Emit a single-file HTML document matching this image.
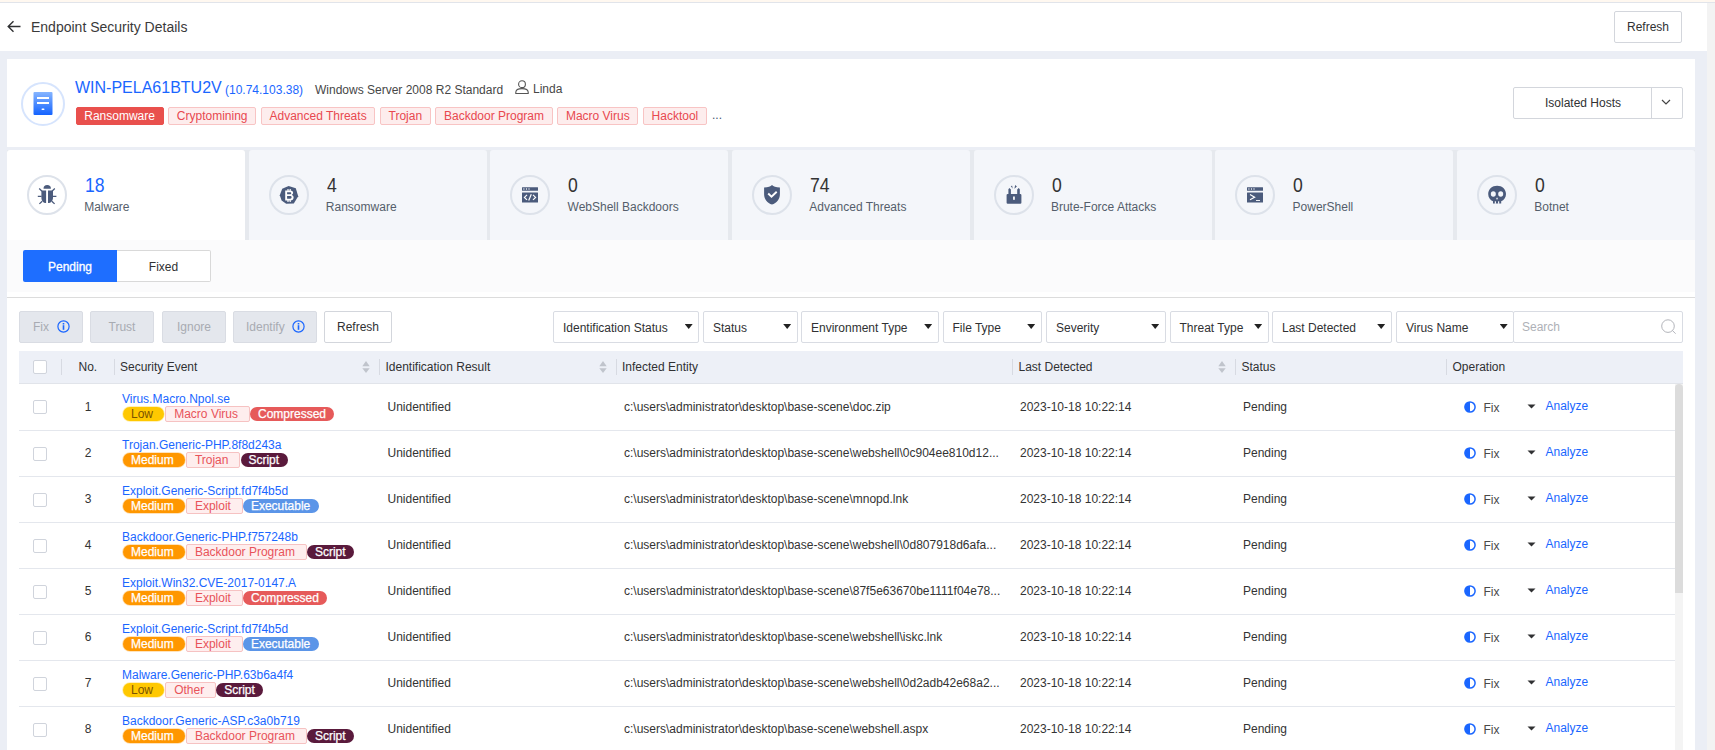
<!DOCTYPE html>
<html><head><meta charset="utf-8">
<style>
*{box-sizing:border-box;margin:0;padding:0}
html,body{width:1715px;height:750px;overflow:hidden}
body{position:relative;background:#ebeef5;font-family:"Liberation Sans",sans-serif;font-size:12px;color:#333;line-height:14px}
.a{position:absolute;white-space:nowrap}
.t{position:absolute;white-space:nowrap;line-height:14px;height:14px}
.btn{position:absolute;background:#fff;border:1px solid #d3d6dc;border-radius:2px;text-align:center;color:#303133}
.htag{position:absolute;top:107px;height:18px;line-height:16px;border:1px solid #f8c4c4;background:#fdeded;color:#e8484f;border-radius:2px;padding:0 7.75px;white-space:nowrap}
.card{position:absolute;top:150px;width:238px;height:90px;background:#f4f6fa}
.circ{position:absolute;left:20px;top:25px;width:40px;height:40px;border:2px solid #dde2ea;border-radius:50%}
.num{position:absolute;left:78px;top:174px;font-size:20px;line-height:22px;color:#3a3a3a;transform:scaleX(0.88);transform-origin:0 0}
.lbl{position:absolute;left:78px;top:200px;color:#555e6b}
.tb{position:absolute;top:311px;height:32px;line-height:30px;border:1px solid #d9dce3;background:#e4e7ed;color:#a8abb2;border-radius:2px;text-align:center}
.dd{position:absolute;top:311px;height:32px;line-height:32px;border:1px solid #d9dce3;background:#fff;color:#303133;border-radius:2px;padding-left:9px}
.dd i{position:absolute;right:5.3px;top:11.9px;width:8px;height:5px;background:#222;clip-path:polygon(0 0,100% 0,50% 100%)}
.hsep{position:absolute;top:359px;width:1px;height:16px;background:#d7dae2}
.srt{position:absolute;top:361px;width:8px;height:12px}
.row{position:absolute;left:19px;width:1656px;height:46px;border-bottom:1px solid #e4e7ed;background:#fff}
.cb{position:absolute;width:14px;height:14px;border:1px solid #d0d4dc;border-radius:2px;background:#fff}
.ev{position:absolute;color:#1a66ff}
.pill{position:absolute;height:14px;line-height:15px;border-radius:7px;white-space:nowrap;padding-left:8.2px}
.rtag{position:absolute;height:16px;line-height:15px;border:1px solid #f6c2c2;background:#feeeee;color:#e8535a;border-radius:2px;padding-left:7.9px;white-space:nowrap}
.op{position:absolute;color:#1a66ff}
</style></head><body>
<!-- top strip -->
<div class="a" style="left:0;top:0;width:1715px;height:2px;background:#fff8f0"></div>
<div class="a" style="left:0;top:2px;width:1715px;height:1px;background:#e1e4ea"></div>
<!-- page scrollbar track -->
<div class="a" style="left:1707px;top:3px;width:8px;height:747px;background:#f3f3f3"></div>
<!-- header -->
<div class="a" style="left:0;top:3px;width:1707px;height:48px;background:#fff"></div>
<svg class="a" style="left:7px;top:20px" width="14" height="13" viewBox="0 0 14 13"><path d="M13.5 6.5H1.2M6.5 1.2L1.2 6.5L6.5 11.8" fill="none" stroke="#303133" stroke-width="1.4"/></svg>
<div class="a" style="left:31px;top:19px;font-size:14px;line-height:16px;color:#3a3a3a">Endpoint Security Details</div>
<div class="btn" style="left:1614px;top:11px;width:68px;height:32px;line-height:30px">Refresh</div>

<!-- host card -->
<div class="a" style="left:7px;top:59px;width:1688px;height:88px;background:#fff"></div>
<div class="a" style="left:21px;top:81.6px;width:44px;height:44px;border:2px solid #d6e4fd;border-radius:50%"></div>
<svg class="a" style="left:33px;top:92px" width="20" height="23" viewBox="0 0 20 23"><defs><linearGradient id="sg" x1="0" y1="0" x2="0" y2="1"><stop offset="0" stop-color="#86b5ff"/><stop offset="1" stop-color="#1463ff"/></linearGradient></defs><rect x="0.5" y="0" width="19" height="23" rx="1" fill="url(#sg)"/><rect x="4" y="5" width="12" height="2" fill="#fff"/><rect x="4" y="10" width="12" height="2" fill="#fff"/><rect x="8.5" y="16.5" width="3" height="1.5" rx="0.7" fill="#fff"/></svg>
<div class="a" style="left:75px;top:79px;font-size:16px;line-height:18px;color:#1a66ff">WIN-PELA61BTU2V</div>
<div class="t" style="left:225px;top:83px;color:#1a66ff">(10.74.103.38)</div>
<div class="t" style="left:315px;top:83px;color:#474747">Windows Server 2008 R2 Standard</div>
<svg class="a" style="left:515px;top:80px" width="14" height="14" viewBox="0 0 14 14"><circle cx="7" cy="4.2" r="3.4" fill="none" stroke="#555" stroke-width="1.1"/><path d="M0.8 13.5V12.3C0.8 9.8 3.2 8.6 7 8.6S13.2 9.8 13.2 12.3V13.5Z" fill="none" stroke="#555" stroke-width="1.1"/></svg>
<div class="t" style="left:533px;top:82px;color:#474747">Linda</div>

<div class="htag" style="left:75.50px;width:88.20px;background:#e9504d;border-color:#e9504d;color:#fff;">Ransomware</div>
<div class="htag" style="left:168.10px;width:88.20px;">Cryptomining</div>
<div class="htag" style="left:260.71px;width:114.64px;">Advanced Threats</div>
<div class="htag" style="left:379.75px;width:51.08px;">Trojan</div>
<div class="htag" style="left:435.23px;width:117.53px;">Backdoor Program</div>
<div class="htag" style="left:557.16px;width:81.30px;">Macro Virus</div>
<div class="htag" style="left:642.85px;width:64.19px;">Hacktool</div>
<div class="t" style="left:712px;top:108px;color:#4a5670">...</div>
<div class="btn" style="left:1513px;top:87px;width:170px;height:32px;line-height:30px"><span style="position:absolute;left:0;width:138px;text-align:center">Isolated Hosts</span><span style="position:absolute;left:137px;top:-1px;width:1px;height:32px;background:#d3d6dc"></span></div>
<svg class="a" style="left:1661px;top:99px" width="10" height="6" viewBox="0 0 10 6"><path d="M1 1L5 5L9 1" fill="none" stroke="#444" stroke-width="1.2"/></svg>

<div class="a" style="left:7px;top:150px;width:1688px;height:90px;background:#e6e9ee"></div>
<div class="card" style="left:7.00px;background:#fff;border-radius:3px 3px 0 0"><div class="circ"></div><svg class="a" style="left:25px;top:30px" width="30" height="30" viewBox="0 0 30 30"><path d="M11.5 8.8A3.7 3.7 0 0 1 18.9 8.8Z" fill="#4b5b7c"/><path d="M9.4 10.5H14.1V23.1C11.3 22.9 9.4 20.6 9.4 17.4Z M16 10.5H21V17.4C21 20.6 19 22.9 16 23.1Z" fill="#4b5b7c"/><path d="M7.2 8.5L10 11.2M22.8 8.5L20 11.2M5.8 16.4H9.6M20.8 16.4H24.4M7.4 23.9L10.2 21.2M22.6 23.9L19.8 21.2" stroke="#4b5b7c" stroke-width="1.3" fill="none"/></svg></div>
<div class="num" style="left:85.00px;color:#1a66ff">18</div>
<div class="lbl t" style="left:84.20px">Malware</div>
<div class="card" style="left:248.67px;background:#f4f6fa;border-radius:3px 3px 0 0"><div class="circ"></div><svg class="a" style="left:25px;top:30px" width="30" height="30" viewBox="0 0 30 30"><path d="M14.6 5.9L21.8 8.3L24.2 16.2L19.8 23.5L12.2 23.8L7.6 20.6L5.8 15.2L8.2 8.8Z" fill="#4b5b7c"/><path d="M11.2 10.6H16.4C18.2 10.6 19.1 11.6 19.1 12.8C19.1 13.9 18.5 14.6 17.6 14.9C18.9 15.2 19.6 16.1 19.6 17.4C19.6 19.2 18.4 20.4 16.3 20.4H11.2Z M13.1 12.2V14.3H16C16.8 14.3 17.2 13.9 17.2 13.2C17.2 12.6 16.8 12.2 16 12.2Z M13.1 15.9V18.7H16.2C17.1 18.7 17.6 18.2 17.6 17.3C17.6 16.4 17.1 15.9 16.2 15.9Z M13.4 8.9H14.6V10.6H13.4Z M15.6 8.9H16.8V10.6H15.6Z M13.4 20.4H14.6V22H13.4Z M15.6 20.4H16.8V22H15.6Z" fill="#fff" fill-rule="evenodd"/></svg></div>
<div class="num" style="left:326.67px;color:#333">4</div>
<div class="lbl t" style="left:325.87px">Ransomware</div>
<div class="card" style="left:490.34px;background:#f4f6fa;border-radius:3px 3px 0 0"><div class="circ"></div><svg class="a" style="left:25px;top:30px" width="30" height="30" viewBox="0 0 30 30"><rect x="7" y="7.2" width="16" height="3.6" rx="0.4" fill="#4b5b7c"/><rect x="7" y="12.4" width="16" height="10.2" rx="0.4" fill="#4b5b7c"/><circle cx="8.9" cy="9" r="0.65" fill="#fff"/><circle cx="11.5" cy="9" r="0.65" fill="#fff"/><circle cx="14" cy="9" r="0.65" fill="#fff"/><path d="M12 14.8L9.4 17.4L12 19.9M18 14.8L20.6 17.4L18 19.9M16.3 14.2L13.7 20.5" stroke="#fff" stroke-width="1.2" fill="none"/></svg></div>
<div class="num" style="left:568.34px;color:#333">0</div>
<div class="lbl t" style="left:567.54px">WebShell Backdoors</div>
<div class="card" style="left:732.01px;background:#f4f6fa;border-radius:3px 3px 0 0"><div class="circ"></div><svg class="a" style="left:25px;top:30px" width="30" height="30" viewBox="0 0 30 30"><path d="M15 5C13.6 6.4 11.2 7.3 7.1 7.5V14.2C7.1 19.2 10.4 22.8 15 24.6C19.6 22.8 22.9 19.2 22.9 14.2V7.5C18.8 7.3 16.4 6.4 15 5Z" fill="#4b5b7c"/><path d="M11.2 13.5L14.5 16.7L19.7 11.7" stroke="#fff" stroke-width="1.9" fill="none"/></svg></div>
<div class="num" style="left:810.01px;color:#333">74</div>
<div class="lbl t" style="left:809.21px">Advanced Threats</div>
<div class="card" style="left:973.68px;background:#f4f6fa;border-radius:3px 3px 0 0"><div class="circ"></div><svg class="a" style="left:25px;top:30px" width="30" height="30" viewBox="0 0 30 30"><rect x="7.6" y="14" width="14.8" height="9.8" rx="1.1" fill="#4b5b7c"/><path d="M9.4 14V9.2L10.4 8L11.9 9.4V14Z M18.2 14V9.4L19.7 8L20.8 9.2V14Z M11.8 6L13.2 5.8L13.6 8.8Z M16.2 5L17.9 6.4L15.4 8.8Z" fill="#4b5b7c"/><rect x="14.1" y="16.5" width="1.7" height="3.3" fill="#fff"/></svg></div>
<div class="num" style="left:1051.68px;color:#333">0</div>
<div class="lbl t" style="left:1050.88px">Brute-Force Attacks</div>
<div class="card" style="left:1215.35px;background:#f4f6fa;border-radius:3px 3px 0 0"><div class="circ"></div><svg class="a" style="left:25px;top:30px" width="30" height="30" viewBox="0 0 30 30"><rect x="7" y="7.2" width="16" height="3.6" rx="0.4" fill="#4b5b7c"/><rect x="7" y="12.4" width="16" height="10.2" rx="0.4" fill="#4b5b7c"/><circle cx="8.9" cy="9" r="0.65" fill="#fff"/><circle cx="11.5" cy="9" r="0.65" fill="#fff"/><circle cx="14" cy="9" r="0.65" fill="#fff"/><path d="M10 14.6L14.6 17.3L10 19.8" stroke="#fff" stroke-width="1.2" fill="none"/><rect x="16" y="20.1" width="4" height="0.9" fill="#fff"/></svg></div>
<div class="num" style="left:1293.35px;color:#333">0</div>
<div class="lbl t" style="left:1292.55px">PowerShell</div>
<div class="card" style="left:1457.02px;background:#f4f6fa;border-radius:3px 3px 0 0"><div class="circ"></div><svg class="a" style="left:25px;top:30px" width="30" height="30" viewBox="0 0 30 30"><path d="M15.1 5.8C10.1 5.8 6.2 9.3 6.2 13.9C6.2 17.3 8.3 20 11 21.2V23.6H19.2V21.2C21.9 20 24 17.3 24 13.9C24 9.3 20.1 5.8 15.1 5.8Z" fill="#4b5b7c"/><ellipse cx="11.3" cy="14" rx="2.5" ry="2.8" fill="#f4f6fa"/><ellipse cx="18.7" cy="14" rx="2.5" ry="2.8" fill="#f4f6fa"/><path d="M15.05 17.2L16.1 19.3H14Z" fill="#f4f6fa"/><rect x="12.8" y="21.3" width="1.2" height="2.5" fill="#f4f6fa"/><rect x="16" y="21.3" width="1.2" height="2.5" fill="#f4f6fa"/></svg></div>
<div class="num" style="left:1535.02px;color:#333">0</div>
<div class="lbl t" style="left:1534.22px">Botnet</div>
<div class="a" style="left:7px;top:240px;width:1688px;height:510px;background:#fff"></div>
<div class="a" style="left:7px;top:240px;width:1688px;height:52px;background:#fbfbfc"></div>
<div class="a" style="left:7px;top:297px;width:1688px;height:1px;background:#dcdcdc"></div>
<div class="a" style="left:23px;top:250px;width:94px;height:32px;line-height:34px;background:#1e6eff;color:#fff;text-align:center;border-radius:2px 0 0 2px;-webkit-text-stroke:0.3px #fff">Pending</div>
<div class="a" style="left:117px;top:250px;width:94px;height:32px;line-height:32px;background:#fff;border:1px solid #d9d9d9;border-left:none;color:#303133;text-align:center;border-radius:0 2px 2px 0">Fixed</div>

<div class="tb" style="left:19px;width:64px;"><span style="position:absolute;left:13px">Fix</span><svg style="position:absolute;left:36.5px;top:7.6px" width="13" height="13" viewBox="0 0 13 13"><circle cx="6.5" cy="6.5" r="5.6" fill="none" stroke="#1a66ff" stroke-width="1.2"/><rect x="5.7" y="5.2" width="1.6" height="4.6" fill="#1a66ff"/><rect x="5.7" y="3" width="1.6" height="1.5" fill="#1a66ff"/></svg></div>
<div class="tb" style="left:90px;width:64px;">Trust</div>
<div class="tb" style="left:162px;width:64px;">Ignore</div>
<div class="tb" style="left:233px;width:84px;"><span style="position:absolute;left:12px">Identify</span><svg style="position:absolute;left:57.6px;top:7.6px" width="13" height="13" viewBox="0 0 13 13"><circle cx="6.5" cy="6.5" r="5.6" fill="none" stroke="#1a66ff" stroke-width="1.2"/><rect x="5.7" y="5.2" width="1.6" height="4.6" fill="#1a66ff"/><rect x="5.7" y="3" width="1.6" height="1.5" fill="#1a66ff"/></svg></div>
<div class="btn" style="left:324px;top:311px;width:68px;height:32px;line-height:30px">Refresh</div>
<div class="dd" style="left:553.0px;width:146.0px">Identification Status<i></i></div>
<div class="dd" style="left:703.0px;width:94.5px">Status<i></i></div>
<div class="dd" style="left:801.0px;width:137.5px">Environment Type<i></i></div>
<div class="dd" style="left:942.5px;width:99.0px">File Type<i></i></div>
<div class="dd" style="left:1046.0px;width:119.5px">Severity<i></i></div>
<div class="dd" style="left:1169.5px;width:99.0px">Threat Type<i></i></div>
<div class="dd" style="left:1272.0px;width:119.5px">Last Detected<i></i></div>
<div class="dd" style="left:1396.0px;width:118.0px">Virus Name<i></i></div>
<div class="dd" style="left:1513px;width:170px;color:#aeb1b7;line-height:30px;padding-left:8px">Search<svg style="position:absolute;left:147px;top:6.5px" width="17" height="17" viewBox="0 0 17 17"><circle cx="7.0" cy="7.1" r="6.3" fill="none" stroke="#a9acb2" stroke-width="0.9"/><path d="M11.5 11.6L14.6 14.7" stroke="#a9acb2" stroke-width="0.9"/></svg></div>
<div class="a" style="left:19px;top:351px;width:1664px;height:33px;background:#edf0f7;border-bottom:1px solid #e1e4ea"></div>
<div class="cb" style="left:33px;top:360px"></div>
<div class="hsep" style="left:61.0px"></div>
<div class="hsep" style="left:114.0px"></div>
<div class="hsep" style="left:379.0px"></div>
<div class="hsep" style="left:616.0px"></div>
<div class="hsep" style="left:1012.0px"></div>
<div class="hsep" style="left:1235.0px"></div>
<div class="hsep" style="left:1446.0px"></div>
<svg class="srt" style="left:362.0px" viewBox="0 0 8 12"><path d="M4 0.1L7.7 5.2H0.3Z" fill="#c0c4cc"/><path d="M4 12L7.7 7.2H0.3Z" fill="#c0c4cc"/></svg>
<svg class="srt" style="left:599.2px" viewBox="0 0 8 12"><path d="M4 0.1L7.7 5.2H0.3Z" fill="#c0c4cc"/><path d="M4 12L7.7 7.2H0.3Z" fill="#c0c4cc"/></svg>
<svg class="srt" style="left:1218.2px" viewBox="0 0 8 12"><path d="M4 0.1L7.7 5.2H0.3Z" fill="#c0c4cc"/><path d="M4 12L7.7 7.2H0.3Z" fill="#c0c4cc"/></svg>
<div class="t" style="left:78.5px;top:360px;color:#303133">No.</div>
<div class="t" style="left:120.0px;top:360px;color:#303133">Security Event</div>
<div class="t" style="left:385.5px;top:360px;color:#303133">Identification Result</div>
<div class="t" style="left:622.0px;top:360px;color:#303133">Infected Entity</div>
<div class="t" style="left:1018.5px;top:360px;color:#303133">Last Detected</div>
<div class="t" style="left:1241.5px;top:360px;color:#303133">Status</div>
<div class="t" style="left:1452.5px;top:360px;color:#303133">Operation</div>
<div class="row" style="top:385px"></div>
<div class="cb" style="left:33px;top:400px"></div>
<div class="t" style="left:79px;width:18px;text-align:center;top:400px">1</div>
<div class="t ev" style="left:122px;top:391.6px">Virus.Macro.Npol.se</div>
<div class="pill" style="left:122.80px;top:407px;width:41.52px;background:#ffc800;color:#7a5200;box-shadow:0 0 0 0.8px rgba(255,200,0,0.35);">Low</div>
<div class="rtag" style="left:165.32px;top:406px;width:84.60px">Macro Virus</div>
<div class="pill" style="left:250.21px;top:407px;width:84.23px;background:#e65a5a;color:#fff;padding-left:7.8px;-webkit-text-stroke:0.25px #fff">Compressed</div>
<div class="t" style="left:387.5px;top:400px">Unidentified</div>
<div class="t" style="left:624px;top:400px;">c:\users\administrator\desktop\base-scene\doc.zip</div>
<div class="t" style="left:1020px;top:400px">2023-10-18 10:22:14</div>
<div class="t" style="left:1243px;top:400px">Pending</div>
<svg class="a" style="left:1463.8px;top:401px" width="12" height="12" viewBox="0 0 12 12"><circle cx="6" cy="6" r="5.1" fill="none" stroke="#1a66ff" stroke-width="1.5"/><path d="M6 0.9V11.1A5.1 5.1 0 0 1 6 0.9Z" fill="#1a66ff"/></svg>
<div class="t" style="left:1483.5px;top:401px;color:#4a4a4a">Fix</div>
<svg class="a" style="left:1527px;top:404px" width="9" height="5" viewBox="0 0 9 5"><path d="M0.5 0.5H8.5L4.5 4.5Z" fill="#303133"/></svg>
<div class="t op" style="left:1545.5px;top:399px">Analyze</div>
<div class="row" style="top:431px"></div>
<div class="cb" style="left:33px;top:447px"></div>
<div class="t" style="left:79px;width:18px;text-align:center;top:446px">2</div>
<div class="t ev" style="left:122px;top:437.6px">Trojan.Generic-PHP.8f8d243a</div>
<div class="pill" style="left:122.80px;top:453px;width:62.19px;background:#ff9700;color:#fff;-webkit-text-stroke:0.25px #fff;box-shadow:0 0 0 0.8px rgba(255,151,0,0.35);">Medium</div>
<div class="rtag" style="left:185.99px;top:452px;width:54.38px">Trojan</div>
<div class="pill" style="left:240.67px;top:453px;width:46.87px;background:#5a1a3c;color:#fff;padding-left:7.8px;-webkit-text-stroke:0.25px #fff">Script</div>
<div class="t" style="left:387.5px;top:446px">Unidentified</div>
<div class="t" style="left:624px;top:446px;">c:\users\administrator\desktop\base-scene\webshell\0c904ee810d12...</div>
<div class="t" style="left:1020px;top:446px">2023-10-18 10:22:14</div>
<div class="t" style="left:1243px;top:446px">Pending</div>
<svg class="a" style="left:1463.8px;top:447px" width="12" height="12" viewBox="0 0 12 12"><circle cx="6" cy="6" r="5.1" fill="none" stroke="#1a66ff" stroke-width="1.5"/><path d="M6 0.9V11.1A5.1 5.1 0 0 1 6 0.9Z" fill="#1a66ff"/></svg>
<div class="t" style="left:1483.5px;top:447px;color:#4a4a4a">Fix</div>
<svg class="a" style="left:1527px;top:450px" width="9" height="5" viewBox="0 0 9 5"><path d="M0.5 0.5H8.5L4.5 4.5Z" fill="#303133"/></svg>
<div class="t op" style="left:1545.5px;top:445px">Analyze</div>
<div class="row" style="top:477px"></div>
<div class="cb" style="left:33px;top:493px"></div>
<div class="t" style="left:79px;width:18px;text-align:center;top:492px">3</div>
<div class="t ev" style="left:122px;top:483.6px">Exploit.Generic-Script.fd7f4b5d</div>
<div class="pill" style="left:122.80px;top:499px;width:62.19px;background:#ff9700;color:#fff;-webkit-text-stroke:0.25px #fff;box-shadow:0 0 0 0.8px rgba(255,151,0,0.35);">Medium</div>
<div class="rtag" style="left:185.99px;top:498px;width:56.82px">Exploit</div>
<div class="pill" style="left:243.10px;top:499px;width:75.56px;background:#5b95e8;color:#fff;padding-left:7.8px;-webkit-text-stroke:0.25px #fff">Executable</div>
<div class="t" style="left:387.5px;top:492px">Unidentified</div>
<div class="t" style="left:624px;top:492px;">c:\users\administrator\desktop\base-scene\mnopd.lnk</div>
<div class="t" style="left:1020px;top:492px">2023-10-18 10:22:14</div>
<div class="t" style="left:1243px;top:492px">Pending</div>
<svg class="a" style="left:1463.8px;top:493px" width="12" height="12" viewBox="0 0 12 12"><circle cx="6" cy="6" r="5.1" fill="none" stroke="#1a66ff" stroke-width="1.5"/><path d="M6 0.9V11.1A5.1 5.1 0 0 1 6 0.9Z" fill="#1a66ff"/></svg>
<div class="t" style="left:1483.5px;top:493px;color:#4a4a4a">Fix</div>
<svg class="a" style="left:1527px;top:496px" width="9" height="5" viewBox="0 0 9 5"><path d="M0.5 0.5H8.5L4.5 4.5Z" fill="#303133"/></svg>
<div class="t op" style="left:1545.5px;top:491px">Analyze</div>
<div class="row" style="top:523px"></div>
<div class="cb" style="left:33px;top:539px"></div>
<div class="t" style="left:79px;width:18px;text-align:center;top:538px">4</div>
<div class="t ev" style="left:122px;top:529.6px">Backdoor.Generic-PHP.f757248b</div>
<div class="pill" style="left:122.80px;top:545px;width:62.19px;background:#ff9700;color:#fff;-webkit-text-stroke:0.25px #fff;box-shadow:0 0 0 0.8px rgba(255,151,0,0.35);">Medium</div>
<div class="rtag" style="left:185.99px;top:544px;width:120.83px">Backdoor Program</div>
<div class="pill" style="left:307.12px;top:545px;width:46.87px;background:#5a1a3c;color:#fff;padding-left:7.8px;-webkit-text-stroke:0.25px #fff">Script</div>
<div class="t" style="left:387.5px;top:538px">Unidentified</div>
<div class="t" style="left:624px;top:538px;">c:\users\administrator\desktop\base-scene\webshell\0d807918d6afa...</div>
<div class="t" style="left:1020px;top:538px">2023-10-18 10:22:14</div>
<div class="t" style="left:1243px;top:538px">Pending</div>
<svg class="a" style="left:1463.8px;top:539px" width="12" height="12" viewBox="0 0 12 12"><circle cx="6" cy="6" r="5.1" fill="none" stroke="#1a66ff" stroke-width="1.5"/><path d="M6 0.9V11.1A5.1 5.1 0 0 1 6 0.9Z" fill="#1a66ff"/></svg>
<div class="t" style="left:1483.5px;top:539px;color:#4a4a4a">Fix</div>
<svg class="a" style="left:1527px;top:542px" width="9" height="5" viewBox="0 0 9 5"><path d="M0.5 0.5H8.5L4.5 4.5Z" fill="#303133"/></svg>
<div class="t op" style="left:1545.5px;top:537px">Analyze</div>
<div class="row" style="top:569px"></div>
<div class="cb" style="left:33px;top:585px"></div>
<div class="t" style="left:79px;width:18px;text-align:center;top:584px">5</div>
<div class="t ev" style="left:122px;top:575.6px">Exploit.Win32.CVE-2017-0147.A</div>
<div class="pill" style="left:122.80px;top:591px;width:62.19px;background:#ff9700;color:#fff;-webkit-text-stroke:0.25px #fff;box-shadow:0 0 0 0.8px rgba(255,151,0,0.35);">Medium</div>
<div class="rtag" style="left:185.99px;top:590px;width:56.82px">Exploit</div>
<div class="pill" style="left:243.10px;top:591px;width:84.23px;background:#e65a5a;color:#fff;padding-left:7.8px;-webkit-text-stroke:0.25px #fff">Compressed</div>
<div class="t" style="left:387.5px;top:584px">Unidentified</div>
<div class="t" style="left:624px;top:584px;">c:\users\administrator\desktop\base-scene\87f5e63670be1111f04e78...</div>
<div class="t" style="left:1020px;top:584px">2023-10-18 10:22:14</div>
<div class="t" style="left:1243px;top:584px">Pending</div>
<svg class="a" style="left:1463.8px;top:585px" width="12" height="12" viewBox="0 0 12 12"><circle cx="6" cy="6" r="5.1" fill="none" stroke="#1a66ff" stroke-width="1.5"/><path d="M6 0.9V11.1A5.1 5.1 0 0 1 6 0.9Z" fill="#1a66ff"/></svg>
<div class="t" style="left:1483.5px;top:585px;color:#4a4a4a">Fix</div>
<svg class="a" style="left:1527px;top:588px" width="9" height="5" viewBox="0 0 9 5"><path d="M0.5 0.5H8.5L4.5 4.5Z" fill="#303133"/></svg>
<div class="t op" style="left:1545.5px;top:583px">Analyze</div>
<div class="row" style="top:615px"></div>
<div class="cb" style="left:33px;top:631px"></div>
<div class="t" style="left:79px;width:18px;text-align:center;top:630px">6</div>
<div class="t ev" style="left:122px;top:621.6px">Exploit.Generic-Script.fd7f4b5d</div>
<div class="pill" style="left:122.80px;top:637px;width:62.19px;background:#ff9700;color:#fff;-webkit-text-stroke:0.25px #fff;box-shadow:0 0 0 0.8px rgba(255,151,0,0.35);">Medium</div>
<div class="rtag" style="left:185.99px;top:636px;width:56.82px">Exploit</div>
<div class="pill" style="left:243.10px;top:637px;width:75.56px;background:#5b95e8;color:#fff;padding-left:7.8px;-webkit-text-stroke:0.25px #fff">Executable</div>
<div class="t" style="left:387.5px;top:630px">Unidentified</div>
<div class="t" style="left:624px;top:630px;">c:\users\administrator\desktop\base-scene\webshell\iskc.lnk</div>
<div class="t" style="left:1020px;top:630px">2023-10-18 10:22:14</div>
<div class="t" style="left:1243px;top:630px">Pending</div>
<svg class="a" style="left:1463.8px;top:631px" width="12" height="12" viewBox="0 0 12 12"><circle cx="6" cy="6" r="5.1" fill="none" stroke="#1a66ff" stroke-width="1.5"/><path d="M6 0.9V11.1A5.1 5.1 0 0 1 6 0.9Z" fill="#1a66ff"/></svg>
<div class="t" style="left:1483.5px;top:631px;color:#4a4a4a">Fix</div>
<svg class="a" style="left:1527px;top:634px" width="9" height="5" viewBox="0 0 9 5"><path d="M0.5 0.5H8.5L4.5 4.5Z" fill="#303133"/></svg>
<div class="t op" style="left:1545.5px;top:629px">Analyze</div>
<div class="row" style="top:661px"></div>
<div class="cb" style="left:33px;top:677px"></div>
<div class="t" style="left:79px;width:18px;text-align:center;top:676px">7</div>
<div class="t ev" style="left:122px;top:667.6px">Malware.Generic-PHP.63b6a4f4</div>
<div class="pill" style="left:122.80px;top:683px;width:41.52px;background:#ffc800;color:#7a5200;box-shadow:0 0 0 0.8px rgba(255,200,0,0.35);">Low</div>
<div class="rtag" style="left:165.32px;top:682px;width:50.80px">Other</div>
<div class="pill" style="left:216.42px;top:683px;width:46.87px;background:#5a1a3c;color:#fff;padding-left:7.8px;-webkit-text-stroke:0.25px #fff">Script</div>
<div class="t" style="left:387.5px;top:676px">Unidentified</div>
<div class="t" style="left:624px;top:676px;">c:\users\administrator\desktop\base-scene\webshell\0d2adb42e68a2...</div>
<div class="t" style="left:1020px;top:676px">2023-10-18 10:22:14</div>
<div class="t" style="left:1243px;top:676px">Pending</div>
<svg class="a" style="left:1463.8px;top:677px" width="12" height="12" viewBox="0 0 12 12"><circle cx="6" cy="6" r="5.1" fill="none" stroke="#1a66ff" stroke-width="1.5"/><path d="M6 0.9V11.1A5.1 5.1 0 0 1 6 0.9Z" fill="#1a66ff"/></svg>
<div class="t" style="left:1483.5px;top:677px;color:#4a4a4a">Fix</div>
<svg class="a" style="left:1527px;top:680px" width="9" height="5" viewBox="0 0 9 5"><path d="M0.5 0.5H8.5L4.5 4.5Z" fill="#303133"/></svg>
<div class="t op" style="left:1545.5px;top:675px">Analyze</div>
<div class="row" style="top:707px"></div>
<div class="cb" style="left:33px;top:723px"></div>
<div class="t" style="left:79px;width:18px;text-align:center;top:722px">8</div>
<div class="t ev" style="left:122px;top:713.6px">Backdoor.Generic-ASP.c3a0b719</div>
<div class="pill" style="left:122.80px;top:729px;width:62.19px;background:#ff9700;color:#fff;-webkit-text-stroke:0.25px #fff;box-shadow:0 0 0 0.8px rgba(255,151,0,0.35);">Medium</div>
<div class="rtag" style="left:185.99px;top:728px;width:120.83px">Backdoor Program</div>
<div class="pill" style="left:307.12px;top:729px;width:46.87px;background:#5a1a3c;color:#fff;padding-left:7.8px;-webkit-text-stroke:0.25px #fff">Script</div>
<div class="t" style="left:387.5px;top:722px">Unidentified</div>
<div class="t" style="left:624px;top:722px;">c:\users\administrator\desktop\base-scene\webshell.aspx</div>
<div class="t" style="left:1020px;top:722px">2023-10-18 10:22:14</div>
<div class="t" style="left:1243px;top:722px">Pending</div>
<svg class="a" style="left:1463.8px;top:723px" width="12" height="12" viewBox="0 0 12 12"><circle cx="6" cy="6" r="5.1" fill="none" stroke="#1a66ff" stroke-width="1.5"/><path d="M6 0.9V11.1A5.1 5.1 0 0 1 6 0.9Z" fill="#1a66ff"/></svg>
<div class="t" style="left:1483.5px;top:723px;color:#4a4a4a">Fix</div>
<svg class="a" style="left:1527px;top:726px" width="9" height="5" viewBox="0 0 9 5"><path d="M0.5 0.5H8.5L4.5 4.5Z" fill="#303133"/></svg>
<div class="t op" style="left:1545.5px;top:721px">Analyze</div>
<div class="a" style="left:1675px;top:384px;width:8px;height:366px;background:#f4f4f4"></div>
<div class="a" style="left:1675px;top:384px;width:8px;height:209px;background:#dcdcdc;border-radius:4px 4px 0 0"></div>
</body></html>
